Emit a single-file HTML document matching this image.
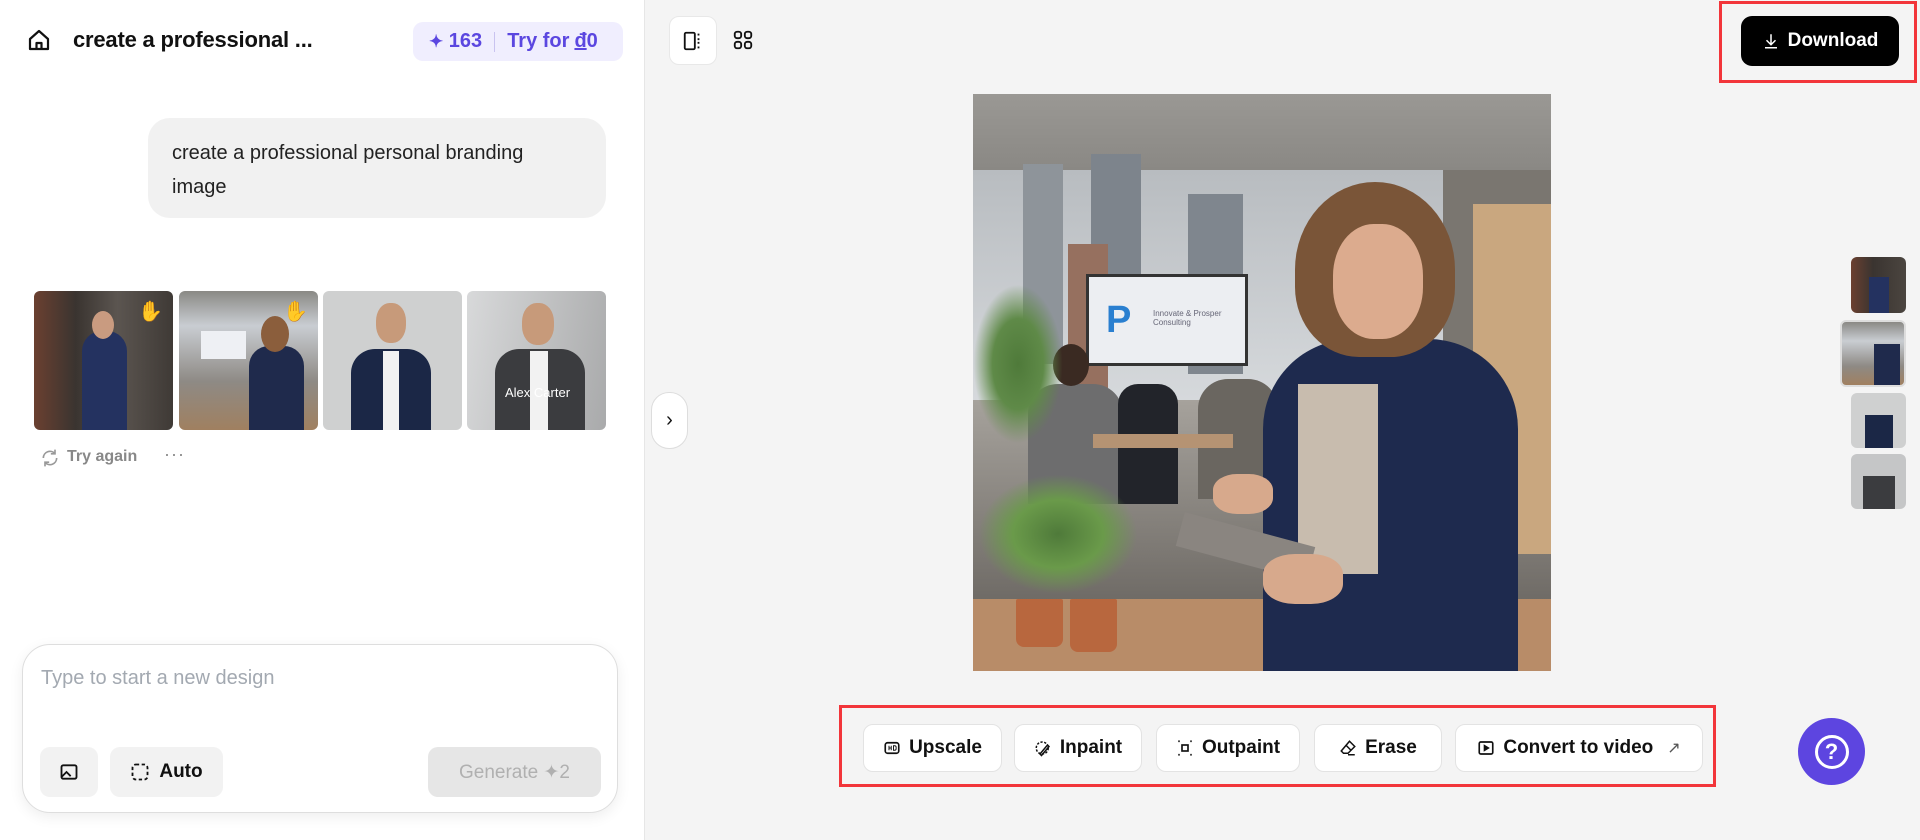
<!DOCTYPE html>
<html><head><meta charset="utf-8"><style>
*{box-sizing:border-box;margin:0;padding:0}
body{width:1920px;height:840px;overflow:hidden;font-family:"Liberation Sans",sans-serif;background:#f4f4f4;position:relative;color:#111}
.abs{position:absolute}
#left{left:0;top:0;width:645px;height:840px;background:#fff;border-right:1px solid #e6e6e6}
.btn{position:absolute;background:#fff;border:1px solid #e3e3e3;border-radius:10px;display:flex;align-items:center;justify-content:center;font-weight:bold;font-size:19px;gap:8px}
.th{position:absolute;border-radius:6px;overflow:hidden}
</style></head><body>
<div id="left" class="abs">
  <svg class="abs" style="left:27px;top:28px" width="24" height="24" viewBox="0 0 24 24" fill="none" stroke="#111" stroke-width="2.2" stroke-linejoin="round"><path d="M3 11L12 3l9 8v10H3z"/><path d="M9.5 21v-6h5v6"/></svg>
  <div class="abs" style="left:73px;top:27px;font-size:22px;font-weight:bold;letter-spacing:-0.2px">create a professional ...</div>
  <div class="abs" style="left:413px;top:22px;width:210px;height:39px;border-radius:10px;background:#f0eefe;color:#5b47e0;font-size:20px;font-weight:bold;display:flex;align-items:center;padding-left:16px">
    <span style="font-size:17px">✦</span>&nbsp;163<span style="display:inline-block;width:1px;height:20px;background:#c9c3f0;margin:0 12px"></span>Try for <span style="text-decoration:underline;margin-left:5px">đ</span>0</div>
  <div class="abs" style="left:148px;top:118px;width:458px;height:100px;border-radius:22px;background:#f1f1f1;padding:18px 24px;font-size:20px;line-height:34px;color:#222">create a professional personal branding image</div>
  <div class="th" style="left:34px;top:291px;width:139px;height:139px;background:linear-gradient(90deg,#6b4030 0,#3a3430 30%,#5b5550 60%,#3f3a36 100%)">
    <div class="abs" style="left:48px;top:40px;width:45px;height:99px;background:#243260;border-radius:20px 20px 0 0"></div>
    <div class="abs" style="left:58px;top:20px;width:22px;height:28px;background:#c99b80;border-radius:50%"></div>
    <div class="abs" style="right:10px;top:8px;color:#f3c23a;font-size:20px">✋</div></div>
  <div class="th" style="left:179px;top:291px;width:139px;height:139px;background:linear-gradient(180deg,#8a8985 0,#c9cdd2 25%,#8e8a85 65%,#a08060 100%)">
    <div class="abs" style="left:22px;top:40px;width:45px;height:28px;background:#eef0f4"></div>
    <div class="abs" style="left:70px;top:55px;width:55px;height:84px;background:#1f2a4c;border-radius:20px 20px 0 0"></div>
    <div class="abs" style="left:82px;top:25px;width:28px;height:36px;background:#8b5e3c;border-radius:50%"></div>
    <div class="abs" style="right:10px;top:8px;color:#f3c23a;font-size:20px">✋</div></div>
  <div class="th" style="left:323px;top:291px;width:139px;height:139px;background:#cfd0d0">
    <div class="abs" style="left:28px;top:58px;width:80px;height:81px;background:#1b2746;border-radius:24px 24px 0 0"></div>
    <div class="abs" style="left:60px;top:60px;width:16px;height:79px;background:#f2f2f2"></div>
    <div class="abs" style="left:53px;top:12px;width:30px;height:40px;background:#c79a7a;border-radius:45%"></div></div>
  <div class="th" style="left:467px;top:291px;width:139px;height:139px;background:linear-gradient(100deg,#d8d9da,#a9aaab)">
    <div class="abs" style="left:28px;top:58px;width:90px;height:81px;background:#3b3c3f;border-radius:24px 24px 0 0"></div>
    <div class="abs" style="left:63px;top:60px;width:18px;height:79px;background:#f2f2f2"></div>
    <div class="abs" style="left:55px;top:12px;width:32px;height:42px;background:#c79a7a;border-radius:45%"></div>
    <div class="abs" style="left:38px;top:94px;color:#fff;font-size:13px">Alex Carter</div></div>
  <svg class="abs" style="left:40px;top:448px" width="20" height="20" viewBox="0 0 24 24" fill="none" stroke="#999" stroke-width="2"><path d="M4 12a8 8 0 0 1 14-5.3M20 12a8 8 0 0 1-14 5.3"/><path d="M18 2v5h-5M6 22v-5h5"/></svg>
  <div class="abs" style="left:67px;top:448px;font-size:16px;color:#888;font-weight:bold">Try again</div>
  <div class="abs" style="left:164px;top:444px;font-size:18px;color:#888;letter-spacing:1px">···</div>
  <div class="abs" style="left:22px;top:644px;width:596px;height:169px;border-radius:28px;background:#fff;border:1px solid #dedede;box-shadow:0 4px 14px rgba(0,0,0,.07)">
    <div class="abs" style="left:18px;top:22px;font-size:20px;color:#a3a9b1">Type to start a new design</div>
    <div class="abs" style="left:17px;top:102px;width:58px;height:50px;border-radius:10px;background:#f2f2f2;display:flex;align-items:center;justify-content:center"><svg width="20" height="20" viewBox="0 0 24 24" fill="none" stroke="#111" stroke-width="2.2"><rect x="3" y="4" width="18" height="16" rx="2"/><path d="M3 18l6-6 5 5M15 9h.01"/></svg></div>
    <div class="abs" style="left:87px;top:102px;width:113px;height:50px;border-radius:10px;background:#f2f2f2;display:flex;align-items:center;justify-content:center;gap:9px;font-size:19px;font-weight:bold"><svg width="20" height="20" viewBox="0 0 24 24" fill="none" stroke="#111" stroke-width="2.2" stroke-dasharray="4 3"><rect x="3" y="3" width="18" height="18" rx="4"/></svg>Auto</div>
    <div class="abs" style="left:405px;top:102px;width:173px;height:50px;border-radius:10px;background:#e6e6e6;display:flex;align-items:center;justify-content:center;font-size:19px;color:#b0b0b0">Generate ✦2</div>
  </div>
</div>

<div class="abs" style="left:669px;top:16px;width:48px;height:49px;background:#fff;border-radius:10px;border:1px solid #e8e8e8;display:flex;align-items:center;justify-content:center"><svg width="22" height="22" viewBox="0 0 24 24" fill="none" stroke="#111" stroke-width="2"><rect x="3" y="3" width="11" height="18" rx="1.5"/><path d="M18 4v2M18 9v2M18 13v2M18 18v2"/></svg></div>
<svg class="abs" style="left:732px;top:29px" width="22" height="22" viewBox="0 0 24 24" fill="none" stroke="#111" stroke-width="2"><rect x="3" y="3" width="7" height="7" rx="2.5"/><rect x="14" y="3" width="7" height="7" rx="2.5"/><rect x="3" y="14" width="7" height="7" rx="2.5"/><rect x="14" y="14" width="7" height="7" rx="2.5"/></svg>

<div class="abs" style="left:1719px;top:1px;width:198px;height:82px;border:3px solid #f2353a"></div>
<div class="abs" style="left:1741px;top:16px;width:158px;height:50px;background:#000;border-radius:11px;color:#fff;font-weight:bold;font-size:19px;display:flex;align-items:center;justify-content:center;gap:8px"><svg width="18" height="18" viewBox="0 0 24 24" fill="none" stroke="#fff" stroke-width="2"><path d="M12 3v13M6 11l6 6 6-6M4 21h16"/></svg>Download</div>

<div class="abs" style="left:651px;top:392px;width:37px;height:57px;background:#fff;border:1px solid #ddd;border-radius:18px;display:flex;align-items:center;justify-content:center;font-size:20px">›</div>

<!-- main image -->
<div class="abs" style="left:973px;top:94px;width:578px;height:577px;overflow:hidden;background:#7a7670">
  <div class="abs" style="left:0;top:0;width:578px;height:76px;background:linear-gradient(#9a9894,#8a8884)"></div>
  <div class="abs" style="left:0;top:76px;width:470px;height:230px;background:linear-gradient(#b8bcc0,#d6d9dc)"></div>
  <div class="abs" style="left:50px;top:70px;width:40px;height:200px;background:#8e949a"></div>
  <div class="abs" style="left:118px;top:60px;width:50px;height:200px;background:#7d848c"></div>
  <div class="abs" style="left:215px;top:100px;width:55px;height:180px;background:#7f868e"></div>
  <div class="abs" style="left:95px;top:150px;width:40px;height:150px;background:#96705f"></div>
  <div class="abs" style="left:113px;top:180px;width:162px;height:92px;background:#eceef2;border:3px solid #333"></div>
  <div class="abs" style="left:133px;top:205px;color:#2a7fd0;font-size:38px;font-weight:bold">P</div>
  <div class="abs" style="left:180px;top:215px;color:#667;font-size:8px">Innovate &amp; Prosper<br>Consulting</div>
  <div class="abs" style="left:0;top:306px;width:578px;height:200px;background:linear-gradient(#a6a29c,#6f6b66)"></div>
  <div class="abs" style="left:55px;top:290px;width:95px;height:120px;background:#6d6d6e;border-radius:30px 30px 0 0"></div>
  <div class="abs" style="left:80px;top:250px;width:36px;height:42px;background:#3a2a22;border-radius:50%"></div>
  <div class="abs" style="left:145px;top:290px;width:60px;height:120px;background:#22242a;border-radius:20px 20px 0 0"></div>
  <div class="abs" style="left:225px;top:285px;width:80px;height:120px;background:#6a6660;border-radius:30px 30px 0 0"></div>
  <div class="abs" style="left:120px;top:340px;width:140px;height:14px;background:#b59373"></div>
  <div class="abs" style="left:0;top:190px;width:90px;height:160px;background:radial-gradient(ellipse,#4f7a3a 0,#5f8a48 40%,transparent 70%)"></div>
  <div class="abs" style="left:500px;top:110px;width:78px;height:350px;background:#c9a77f"></div>
  <div class="abs" style="left:0;top:505px;width:578px;height:72px;background:#b88c68"></div>
  <div class="abs" style="left:5px;top:380px;width:160px;height:120px;background:radial-gradient(ellipse,#4f7a3a 0,#6a9a4a 40%,transparent 70%)"></div>
  <div class="abs" style="left:43px;top:505px;width:47px;height:48px;background:#b8673e;border-radius:2px 2px 8px 8px"></div>
  <div class="abs" style="left:97px;top:505px;width:47px;height:53px;background:#b8673e;border-radius:2px 2px 8px 8px"></div>
  <div class="abs" style="left:290px;top:245px;width:255px;height:340px;background:#1e2a4e;border-radius:90px 90px 0 0"></div>
  <div class="abs" style="left:325px;top:290px;width:80px;height:190px;background:#c8bcae;clip-path:polygon(0 0,100% 0,100% 100%,0 100%)"></div>
  <div class="abs" style="left:322px;top:88px;width:160px;height:175px;background:#7a5538;border-radius:50% 50% 40% 40%"></div>
  <div class="abs" style="left:360px;top:130px;width:90px;height:115px;background:#dcab8e;border-radius:45%"></div>
  <div class="abs" style="left:205px;top:435px;width:135px;height:35px;background:#8a8580;transform:rotate(15deg)"></div>
  <div class="abs" style="left:240px;top:380px;width:60px;height:40px;background:#d7a98c;border-radius:40%"></div>
  <div class="abs" style="left:290px;top:460px;width:80px;height:50px;background:#d7a98c;border-radius:40%"></div>
</div>

<!-- right thumbs -->
<div class="th" style="left:1851px;top:257px;width:55px;height:56px;background:linear-gradient(90deg,#6b4030,#3a3430 40%,#4b4540)"><div class="abs" style="left:18px;top:20px;width:20px;height:36px;background:#243260"></div></div>
<div class="th" style="left:1840px;top:320px;width:66px;height:67px;background:linear-gradient(180deg,#8a8985,#c9cdd2 30%,#8e8a85 70%,#a08060);border:2px solid #ddd"><div class="abs" style="left:32px;top:22px;width:26px;height:45px;background:#1f2a4c"></div></div>
<div class="th" style="left:1851px;top:393px;width:55px;height:55px;background:#cfd0d0"><div class="abs" style="left:14px;top:22px;width:28px;height:33px;background:#1b2746"></div></div>
<div class="th" style="left:1851px;top:454px;width:55px;height:55px;background:#c5c6c7"><div class="abs" style="left:12px;top:22px;width:32px;height:33px;background:#3b3c3f"></div></div>

<!-- bottom toolbar -->
<div class="abs" style="left:839px;top:705px;width:877px;height:82px;border:3px solid #f2353a"></div>
<div class="btn" style="left:863px;top:724px;width:139px;height:48px"><svg width="18" height="18" viewBox="0 0 24 24" fill="none" stroke="#111" stroke-width="2.2"><rect x="3" y="5" width="18" height="14" rx="3"/><path d="M8 9v6M8 12h3M11 9v6M14 9v6h1.5a2 2 0 0 0 2-2v-2a2 2 0 0 0-2-2z" stroke-width="1.3"/></svg>Upscale</div>
<div class="btn" style="left:1014px;top:724px;width:128px;height:48px"><svg width="18" height="18" viewBox="0 0 24 24" fill="none" stroke="#111" stroke-width="2"><circle cx="11" cy="12" r="8" stroke-dasharray="3 2"/><path d="M8 20l10-12 2 2-10 12z"/></svg>Inpaint</div>
<div class="btn" style="left:1156px;top:724px;width:144px;height:48px"><svg width="18" height="18" viewBox="0 0 24 24" fill="none" stroke="#111" stroke-width="2.2"><rect x="8" y="8" width="8" height="8"/><path d="M3 3h2M19 3h2M3 21h2M19 21h2"/></svg>Outpaint</div>
<div class="btn" style="left:1314px;top:724px;width:128px;height:48px"><svg width="18" height="18" viewBox="0 0 24 24" fill="none" stroke="#111" stroke-width="2"><path d="M14 3l7 7-9 9H6l-3-3z"/><path d="M9 8l7 7M12 21h9"/></svg>Erase</div>
<div class="btn" style="left:1455px;top:724px;width:248px;height:48px"><svg width="18" height="18" viewBox="0 0 24 24" fill="none" stroke="#111" stroke-width="2.2"><rect x="3" y="4" width="18" height="16" rx="2"/><path d="M10 9l5 3-5 3z" fill="#111"/></svg>Convert to video <span style="color:#555;font-weight:normal;font-size:16px;margin-left:6px">↗</span></div>

<div class="abs" style="left:1798px;top:718px;width:67px;height:67px;border-radius:50%;background:#5d45e0;display:flex;align-items:center;justify-content:center"><div style="width:34px;height:34px;border:3px solid #fff;border-radius:50%;color:#fff;font-weight:bold;font-size:22px;display:flex;align-items:center;justify-content:center">?</div></div>
</body></html>
